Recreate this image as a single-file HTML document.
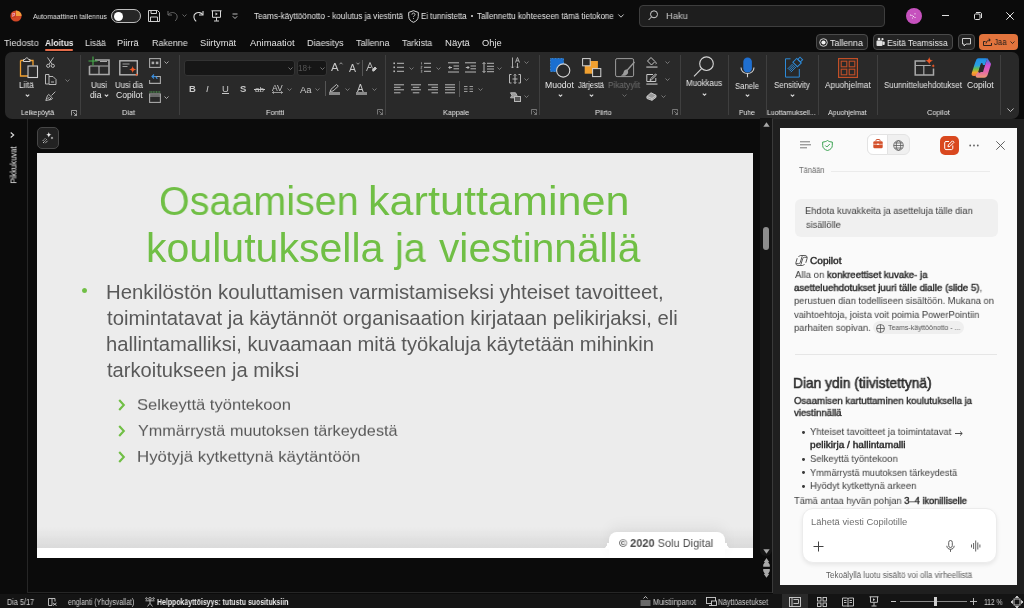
<!DOCTYPE html>
<html><head><meta charset="utf-8">
<style>
*{box-sizing:border-box;margin:0;padding:0}
html,body{width:1024px;height:608px;overflow:hidden;background:#0b0b0b;font-family:"Liberation Sans",sans-serif;position:relative}
.a{position:absolute;white-space:nowrap;will-change:transform}
svg{position:absolute;overflow:visible;will-change:transform}
.t{color:#e6e6e6}
.rib{position:absolute;left:5px;top:52px;width:1014px;height:66.5px;background:#292929;border-radius:7px}
.sep{position:absolute;top:55px;width:1px;height:60px;background:#3f3f3f}
.gl{position:absolute;top:107px;font-size:7px;color:#e8e8e8;white-space:nowrap}
.bl{position:absolute;font-size:7.6px;color:#e8e8e8;white-space:nowrap;text-align:center}
.btn{position:absolute;top:34px;height:16px;border:1px solid #4a4a4a;border-radius:4px;background:#232323}
</style></head><body>

<!-- ===== TITLE BAR ===== -->
<div id="titlebar">
  <!-- ppt logo -->
  <svg style="left:10px;top:10px" width="12" height="12" viewBox="0 0 12 12">
    <circle cx="6" cy="6" r="5.6" fill="#d24726"/>
    <path d="M6 .4A5.6 5.6 0 0 1 11.6 6H6Z" fill="#f39c3c"/>
    <rect x="1.6" y="4" width="4" height="4" fill="#c43e1c"/>
    <text x="2.2" y="7.4" font-size="4.5" fill="#ffb3e0" font-family="Liberation Sans" font-weight="700">P</text>
  </svg>
  <!-- toggle -->
  <div class="a" style="left:111px;top:9px;width:30px;height:14px;border:1px solid #bdbdbd;border-radius:7px;background:#262626"></div>
  <div class="a" style="left:114px;top:12px;width:9px;height:9px;border-radius:50%;background:#fff"></div>
  <!-- save -->
  <svg style="left:148px;top:10px" width="12" height="12" viewBox="0 0 12 12" fill="none" stroke="#cfcfcf" stroke-width="1">
    <path d="M.5 .5h9l2 2v9H.5Z"/><path d="M3 .5v3h5.5v-3"/><path d="M2.5 11.5v-4.5h7v4.5"/>
  </svg>
  <!-- undo (disabled) -->
  <svg style="left:167px;top:10px" width="12" height="12" viewBox="0 0 12 12" fill="none" stroke="#6b6b6b" stroke-width="1">
    <path d="M1 1v4h4"/><path d="M1.3 4.8C2.5 2.5 6 1.8 8.5 3.5c2.5 1.8 2 5.5-.5 7.5"/>
  </svg>
  <svg style="left:182px;top:14px" width="5" height="3" viewBox="0 0 5 3" fill="none" stroke="#7a7a7a" stroke-width=".8"><path d="M.5.5 2.5 2.5 4.5.5"/></svg>
  <!-- redo -->
  <svg style="left:193px;top:10px" width="11" height="12" viewBox="0 0 11 12" fill="none" stroke="#d8d8d8" stroke-width="1.1">
    <path d="M10 1v4H6"/><path d="M9.7 4.8C8.5 2.5 5 1.8 2.5 3.5 0 5.3.5 9 3.2 11.3"/>
  </svg>
  <!-- present -->
  <svg style="left:211px;top:10px" width="11" height="12" viewBox="0 0 11 12" fill="none" stroke="#d8d8d8" stroke-width="1">
    <path d="M.5 .8h10"/><path d="M1.5 .8v6.5h8V.8"/><path d="M5.5 7.3v3.5M3 11h5"/><path d="M4.5 2.5v3l2.3-1.5Z" fill="#d8d8d8" stroke="none"/>
  </svg>
  <!-- customize -->
  <svg style="left:232px;top:13px" width="6" height="7" viewBox="0 0 6 7" fill="none" stroke="#cfcfcf" stroke-width=".9">
    <path d="M.5 1h5"/><path d="M.8 3.3 3 5.5 5.2 3.3"/>
  </svg>

  <!-- shield -->
  <svg style="left:408px;top:10px" width="11" height="13" viewBox="0 0 11 13" fill="none" stroke="#d8d8d8" stroke-width="1">
    <path d="M5.5.7 10.3 2.4v4c0 3-2.2 5-4.8 5.9C2.9 11.4.7 9.4.7 6.4v-4Z"/>
    <path d="M4 4.6c0-1 .7-1.6 1.5-1.6S7 3.6 7 4.5c0 1.1-1.5 1.3-1.5 2.4" stroke-width=".9"/>
    <circle cx="5.5" cy="8.6" r=".5" fill="#d8d8d8" stroke="none"/>
  </svg>
  <div class="a" style="left:471px;top:15px;width:2.4px;height:2.4px;border-radius:50%;background:#e0e0e0"></div>
  <svg style="left:618px;top:14px" width="6" height="4" viewBox="0 0 6 4" fill="none" stroke="#d8d8d8" stroke-width=".9"><path d="M.4.5 3 3.2 5.6.5"/></svg>

  <!-- search -->
  <div class="a" style="left:639px;top:5px;width:246px;height:22px;border:1px solid #3e3e3e;border-radius:4px;background:#1e1e1e"></div>
  <svg style="left:648px;top:10px" width="10" height="11" viewBox="0 0 10 11" fill="none" stroke="#cfcfcf" stroke-width="1">
    <circle cx="6" cy="4.3" r="3.5"/><path d="M3.6 6.8.6 10"/>
  </svg>

  <!-- avatar -->
  <div class="a" style="left:906px;top:8px;width:16px;height:16px;border-radius:50%;background:#c651be"></div>
  <svg style="left:909px;top:12px" width="8" height="8" viewBox="0 0 8 8" fill="#fff">
    <circle cx="1.5" cy="3" r=".6"/><circle cx="3" cy="3.3" r=".6"/><circle cx="6" cy="1.8" r=".6"/><circle cx="4.5" cy="4.5" r=".6"/><circle cx="6" cy="5.5" r=".6"/><circle cx="3.5" cy="6" r=".5"/>
  </svg>
  <!-- window controls -->
  <div class="a" style="left:942px;top:15px;width:7px;height:1px;background:#e0e0e0"></div>
  <svg style="left:974px;top:12px" width="8" height="8" viewBox="0 0 8 8" fill="none" stroke="#e0e0e0" stroke-width="1">
    <rect x=".5" y="2" width="5.5" height="5.5" rx="1"/><path d="M2 .5h4c1 0 1.5.5 1.5 1.5v4"/>
  </svg>
  <svg style="left:1006px;top:12px" width="8" height="8" viewBox="0 0 8 8" fill="none" stroke="#e8e8e8" stroke-width="1">
    <path d="M.3.3 7.7 7.7M7.7.3.3 7.7"/>
  </svg>
</div>

<!-- ===== TABS ===== -->
<div id="tabs">
  <div class="a" style="left:45px;top:49px;width:28px;height:2px;background:#e46c4a;border-radius:1px"></div>

  <div class="btn" style="left:816px;width:52px"></div>
  <svg style="left:819px;top:37.5px" width="9" height="9" viewBox="0 0 9 9"><circle cx="4.5" cy="4.5" r="3.8" fill="none" stroke="#e0e0e0" stroke-width=".9"/><circle cx="4.5" cy="4.5" r="2.1" fill="#f0f0f0"/></svg>
  <div class="btn" style="left:873px;width:80px"></div>
  <svg style="left:876px;top:37px" width="9" height="10" viewBox="0 0 9 10" fill="#e0e0e0"><rect x=".5" y="3.5" width="6" height="5.5" rx="1"/><circle cx="3" cy="2" r="1.3"/><circle cx="6.5" cy="2.2" r="1.1"/><rect x="6.5" y="4.5" width="2.2" height="3.5" rx=".8"/></svg>
  <div class="btn" style="left:958px;width:17px"></div>
  <svg style="left:962px;top:38px" width="9" height="9" viewBox="0 0 9 9" fill="none" stroke="#e0e0e0" stroke-width=".9"><path d="M.5.5h8v5.5H4L2 8V6H.5Z"/></svg>
  <div class="a" style="left:979px;top:34px;width:39px;height:16px;border-radius:4px;background:#e2743d"></div>
  <svg style="left:983px;top:38px" width="9" height="8" viewBox="0 0 9 8" fill="none" stroke="#1a1a1a" stroke-width=".9"><path d="M.5 7.5v-4h2M.5 7.5h8v-2.5"/><path d="M3 5.5C3.5 3 5 2 7 2M5.8.6 7.3 2 5.8 3.4"/></svg>
  <svg style="left:1010px;top:41px" width="5" height="3" viewBox="0 0 5 3" fill="none" stroke="#1a1a1a" stroke-width=".8"><path d="M.5.5 2.5 2.5 4.5.5"/></svg>
</div>

<!-- ===== RIBBON ===== -->
<div class="rib"></div>
<div id="ribbon">
  <!-- separators -->
  <div class="sep" style="left:79.5px"></div>
  <div class="sep" style="left:178.5px"></div>
  <div class="sep" style="left:384.5px"></div>
  <div class="sep" style="left:538.5px"></div>
  <div class="sep" style="left:680px"></div>
  <div class="sep" style="left:727.5px"></div>
  <div class="sep" style="left:766px"></div>
  <div class="sep" style="left:817.5px"></div>
  <div class="sep" style="left:877px"></div>
  <div class="sep" style="left:1000px"></div>

  <!-- Leikepöytä -->
  <svg style="left:19px;top:57px" width="20" height="22" viewBox="0 0 20 22" fill="none">
    <path d="M1.5 3.5h3.5M10.5 3.5h3.5v5M1.5 3.5v15.5h7.5" stroke="#f0a030" stroke-width="1.3"/>
    <path d="M4.5 4.5V2.5h1.5c.3-1 .9-1.6 1.8-1.6s1.5.6 1.8 1.6h1.5v2Z" stroke="#d0d0d0" stroke-width="1"/>
    <rect x="9" y="9" width="9.5" height="11.5" stroke="#d0d0d0" stroke-width="1.1"/>
  </svg>
  <svg style="left:25px;top:94px" width="5" height="3" viewBox="0 0 5 3" fill="none" stroke="#e0e0e0" stroke-width="1.15"><path d="M.8.6 2.5 2.3 4.2.6"/></svg>
  <!-- scissors -->
  <svg style="left:46px;top:57px" width="9" height="11" viewBox="0 0 9 11" fill="none" stroke="#c8c8c8" stroke-width=".9">
    <path d="M1.5.5 6 7.2M7.5.5 3 7.2"/><circle cx="2.2" cy="8.8" r="1.6"/><circle cx="6.8" cy="8.8" r="1.6"/>
  </svg>
  <!-- copy -->
  <svg style="left:44.5px;top:74px" width="12" height="11" viewBox="0 0 12 11" fill="none" stroke="#c8c8c8" stroke-width=".9">
    <path d="M.5.5h3.5v9.5H.5Z"/><path d="M4 2.5h4l3 3v5H4"/><path d="M6 8h3"/>
  </svg>
  <svg style="left:64.5px;top:79px" width="5" height="3" viewBox="0 0 5 3" fill="none" stroke="#8a8a8a" stroke-width=".8"><path d="M.5.5 2.5 2.5 4.5.5"/></svg>
  <!-- painter -->
  <svg style="left:45px;top:90.5px" width="11" height="11" viewBox="0 0 11 11" fill="none" stroke="#c8c8c8" stroke-width=".9">
    <path d="M6.5 4.5 10.3.7"/><path d="M3.8 3.5 7.5 7.2 6.5 8.5 .8 9.5 2.5 4.5Z"/><path d="M2.5 8 4.5 6M4 9 6 7"/>
  </svg>
  <svg style="left:71px;top:109.5px" width="6" height="6" viewBox="0 0 6 6" fill="none" stroke="#bdbdbd" stroke-width=".8"><path d="M.5 5.5V.5h5v2M2.2 2.2 5.5 5.5M5.5 3.2v2.3H3.2"/></svg>

  <!-- Diat -->
  <svg style="left:88px;top:56px" width="22" height="20" viewBox="0 0 22 20" fill="none">
    <path d="M7 4h14v14.5H1.5V10" stroke="#a9a9a9" stroke-width="1.6"/>
    <path d="M1.5 10h19M11 10v8.5" stroke="#a9a9a9" stroke-width="1.2"/>
    <path d="M12 5.5h7" stroke="#a9a9a9" stroke-width="1"/>
    <path d="M5 .5v9M.5 5h9" stroke="#47b04b" stroke-width="1.1"/>
  </svg>
  <svg style="left:104px;top:94px" width="5" height="3" viewBox="0 0 5 3" fill="none" stroke="#e0e0e0" stroke-width="1.15"><path d="M.8.6 2.5 2.3 4.2.6"/></svg>
  <svg style="left:119px;top:59.5px" width="21" height="18" viewBox="0 0 21 18" fill="none">
    <rect x=".8" y=".8" width="17.5" height="14" stroke="#b5b5b5" stroke-width="1.4"/>
    <path d="M3.5 4h7M3.5 6.5h5" stroke="#a0a0a0" stroke-width="1"/>
    <path d="M13.7 6c.5 2.3 1.2 3 3.5 3.5-2.3.5-3 1.2-3.5 3.5-.5-2.3-1.2-3-3.5-3.5 2.3-.5 3-1.2 3.5-3.5Z" fill="#f05a28"/>
    <path d="M17.6 13c.25 1.2.6 1.55 1.8 1.8-1.2.25-1.55.6-1.8 1.8-.25-1.2-.6-1.55-1.8-1.8 1.2-.25 1.55-.6 1.8-1.8Z" fill="#f05a28"/>
  </svg>
  <svg style="left:148.5px;top:57.5px" width="12" height="10" viewBox="0 0 12 10" fill="none" stroke="#a9a9a9" stroke-width="1.1"><rect x=".6" y=".6" width="10.8" height="8.8"/><rect x="2.6" y="3.6" width="2.6" height="2.6" fill="#a9a9a9" stroke="none"/><rect x="6.8" y="3.6" width="2.6" height="2.6" fill="#a9a9a9" stroke="none"/></svg>
  <svg style="left:164px;top:61px" width="5" height="3" viewBox="0 0 5 3" fill="none" stroke="#b8b8b8" stroke-width=".9"><path d="M.5.5 2.5 2.5 4.5.5"/></svg>
  <svg style="left:148.5px;top:74px" width="12" height="10" viewBox="0 0 12 10" fill="none"><path d="M4 2.5h7.4v6.9H.6V6" stroke="#a9a9a9" stroke-width="1.1"/><path d="M5 4.5 3 2.5 5 .5M3 2.5h2.5c1.5 0 2.5 1 2.5 2.5" stroke="#3b8ede" stroke-width="1.1"/></svg>
  <svg style="left:148.5px;top:90.5px" width="12" height="12" viewBox="0 0 12 12" fill="none"><rect x=".6" y="3" width="10.8" height="8.4" stroke="#a9a9a9" stroke-width="1.1"/><path d="M.6 1h10.8" stroke="#5cb85c" stroke-width="1.2" stroke-dasharray="1 .6"/><path d="M.6 5h10.8" stroke="#a9a9a9" stroke-width="1"/></svg>
  <svg style="left:164px;top:96px" width="5" height="3" viewBox="0 0 5 3" fill="none" stroke="#b8b8b8" stroke-width=".9"><path d="M.5.5 2.5 2.5 4.5.5"/></svg>

  <!-- Fontti -->
  <div class="a" style="left:184px;top:60px;width:110.5px;height:15.5px;background:#161616;border:1px solid #333;border-radius:3px"></div>
  <svg style="left:288px;top:67px" width="5" height="3" viewBox="0 0 5 3" fill="none" stroke="#8a8a8a" stroke-width=".8"><path d="M.5.5 2.5 2.5 4.5.5"/></svg>
  <div class="a" style="left:296.5px;top:60px;width:30px;height:15.5px;background:#161616;border:1px solid #333;border-radius:3px"></div>
  <div class="a" style="left:298px;top:63.5px;font-size:8.2px;color:#555">18+</div>
  <svg style="left:320px;top:67px" width="5" height="3" viewBox="0 0 5 3" fill="none" stroke="#8a8a8a" stroke-width=".8"><path d="M.5.5 2.5 2.5 4.5.5"/></svg>
  <div class="a" style="left:331px;top:60.5px;font-size:11.5px;color:#c8c8c8">A</div>
  <svg style="left:339px;top:62px" width="4" height="3" viewBox="0 0 4 3" fill="none" stroke="#c8c8c8" stroke-width=".7"><path d="M.5 2.3 2 .7 3.5 2.3"/></svg>
  <div class="a" style="left:349px;top:61.5px;font-size:10.5px;color:#c8c8c8">A</div>
  <svg style="left:356px;top:62px" width="4" height="3" viewBox="0 0 4 3" fill="none" stroke="#c8c8c8" stroke-width=".7"><path d="M.5.7 2 2.3 3.5.7"/></svg>
  <div class="a" style="left:362px;top:60px;width:1px;height:16px;background:#555"></div>
  <svg style="left:366px;top:62px" width="11" height="11" viewBox="0 0 11 11" fill="none" stroke="#c8c8c8" stroke-width=".9"><path d="M.5 9 4 .5 6.5 6.5"/><path d="M2 5.5h3"/><path d="M6.5 7.5 9 5l1.5 1.5-2.5 2.5-1.2.1Z" fill="#c8c8c8"/></svg>

  <div class="a" style="left:189px;top:83px;font-size:9.5px;font-weight:700;color:#c8c8c8">B</div>
  <div class="a" style="left:206px;top:83px;font-size:9.5px;font-style:italic;color:#c8c8c8">I</div>
  <div class="a" style="left:222px;top:83px;font-size:9.5px;color:#c8c8c8">U</div>
  <div class="a" style="left:222px;top:93px;width:7px;height:1px;background:#c8c8c8"></div>
  <div class="a" style="left:239.5px;top:83px;font-size:9.5px;font-weight:700;color:#c8c8c8">S</div>
  <div class="a" style="left:255px;top:84.5px;font-size:8px;color:#c8c8c8">ab</div>
  <div class="a" style="left:254px;top:89px;width:11px;height:1px;background:#c8c8c8"></div>
  <div class="a" style="left:271.5px;top:82.5px;font-size:8.5px;color:#c8c8c8">AV</div>
  <svg style="left:272px;top:91px" width="11" height="3" viewBox="0 0 11 3" fill="none" stroke="#c8c8c8" stroke-width=".7"><path d="M.5 1.5h10M2 .3.5 1.5 2 2.7M9 .3 10.5 1.5 9 2.7"/></svg>
  <svg style="left:287px;top:88px" width="5" height="3" viewBox="0 0 5 3" fill="none" stroke="#8a8a8a" stroke-width=".8"><path d="M.5.5 2.5 2.5 4.5.5"/></svg>
  <div class="a" style="left:299.5px;top:83.5px;font-size:9.5px;color:#c8c8c8">Aa</div>
  <svg style="left:315px;top:88px" width="5" height="3" viewBox="0 0 5 3" fill="none" stroke="#8a8a8a" stroke-width=".8"><path d="M.5.5 2.5 2.5 4.5.5"/></svg>
  <div class="a" style="left:325px;top:81px;width:1px;height:15px;background:#555"></div>
  <svg style="left:329px;top:83.5px" width="11" height="8" viewBox="0 0 11 8" fill="none" stroke="#c8c8c8" stroke-width=".9"><path d="M1 7.5 2 5.3 7.5 .5 9.3 2.2 4 7Z"/></svg>
  <div class="a" style="left:329px;top:92px;width:11px;height:2.6px;background:#8a8a8a"></div>
  <svg style="left:345px;top:88px" width="5" height="3" viewBox="0 0 5 3" fill="none" stroke="#8a8a8a" stroke-width=".8"><path d="M.5.5 2.5 2.5 4.5.5"/></svg>
  <div class="a" style="left:357px;top:82.5px;font-size:10px;color:#c8c8c8">A</div>
  <div class="a" style="left:356px;top:92px;width:11px;height:2.6px;background:#8a8a8a"></div>
  <svg style="left:372px;top:88px" width="5" height="3" viewBox="0 0 5 3" fill="none" stroke="#8a8a8a" stroke-width=".8"><path d="M.5.5 2.5 2.5 4.5.5"/></svg>
  <svg style="left:377px;top:109px" width="6" height="6" viewBox="0 0 6 6" fill="none" stroke="#8a8a8a" stroke-width=".8"><path d="M.5 5.5V.5h5v2M2.2 2.2 5.5 5.5M5.5 3.2v2.3H3.2"/></svg>
  <!-- Kappale -->
  <svg style="left:392.5px;top:62px" width="11" height="11" viewBox="0 0 11 11" fill="none" stroke="#b8b8b8">
    <path d="M4 1.3h7M4 5.3h7M4 9.3h7" stroke-width="1"/><rect x=".4" y=".5" width="1.6" height="1.6" fill="#b8b8b8" stroke="none"/><rect x=".4" y="4.5" width="1.6" height="1.6" fill="#b8b8b8" stroke="none"/><rect x=".4" y="8.5" width="1.6" height="1.6" fill="#b8b8b8" stroke="none"/>
  </svg>
  <svg style="left:409px;top:67px" width="5" height="3" viewBox="0 0 5 3" fill="none" stroke="#8a8a8a" stroke-width=".8"><path d="M.5.5 2.5 2.5 4.5.5"/></svg>
  <svg style="left:420px;top:62px" width="11" height="11" viewBox="0 0 11 11" fill="none" stroke="#b8b8b8">
    <path d="M4 1.3h7M4 5.3h7M4 9.3h7" stroke-width="1"/><path d="M1.5.2v2.3M.8 4.3h1.3l-1.3 2h1.3M.8 8.2h1.3l-.6 1 .6 1H.8" stroke-width=".6"/>
  </svg>
  <svg style="left:436px;top:67px" width="5" height="3" viewBox="0 0 5 3" fill="none" stroke="#8a8a8a" stroke-width=".8"><path d="M.5.5 2.5 2.5 4.5.5"/></svg>
  <svg style="left:447.5px;top:62px" width="11" height="11" viewBox="0 0 11 11" fill="none" stroke="#b8b8b8" stroke-width="1">
    <path d="M0 .8h11M5.5 4h5.5M5.5 6.8h5.5M0 10h11M4 5.5H.8M2.3 4 .8 5.5 2.3 7"/>
  </svg>
  <svg style="left:464.5px;top:62px" width="11" height="11" viewBox="0 0 11 11" fill="none" stroke="#b8b8b8" stroke-width="1">
    <path d="M0 .8h11M5.5 4h5.5M5.5 6.8h5.5M0 10h11M.8 5.5H4M2.5 4 4 5.5 2.5 7"/>
  </svg>
  <svg style="left:481.5px;top:62px" width="12" height="11" viewBox="0 0 12 11" fill="none" stroke="#b8b8b8" stroke-width="1">
    <path d="M5 1.3h7M5 4.3h7M5 7h7M5 9.7h7M2 .5v10M.5 2 2 .5 3.5 2M.5 9 2 10.5 3.5 9"/>
  </svg>
  <svg style="left:497px;top:67px" width="5" height="3" viewBox="0 0 5 3" fill="none" stroke="#8a8a8a" stroke-width=".8"><path d="M.5.5 2.5 2.5 4.5.5"/></svg>
  <svg style="left:510.5px;top:57px" width="10" height="12" viewBox="0 0 10 12" fill="none" stroke="#b8b8b8" stroke-width=".9">
    <path d="M1.5 .5v10.5M.3 9.7 1.5 11 2.7 9.7M6.5 6v5M5.3 9.7 6.5 11 7.7 9.7M4.5 5.5 6.5.5 8.5 5.5M5.2 3.8h2.6"/>
  </svg>
  <svg style="left:524px;top:61px" width="5" height="3" viewBox="0 0 5 3" fill="none" stroke="#8a8a8a" stroke-width=".8"><path d="M.5.5 2.5 2.5 4.5.5"/></svg>
  <svg style="left:509px;top:74px" width="12" height="10" viewBox="0 0 12 10" fill="none" stroke="#b8b8b8" stroke-width="1">
    <path d="M2.5.5h-2v8.5h2M9.5.5h2v8.5h-2M6 .3v9.2M4.8 1.5 6 .3 7.2 1.5M4.8 8.3 6 9.5 7.2 8.3M3.5 5h5"/>
  </svg>
  <svg style="left:524px;top:78px" width="5" height="3" viewBox="0 0 5 3" fill="none" stroke="#8a8a8a" stroke-width=".8"><path d="M.5.5 2.5 2.5 4.5.5"/></svg>
  <svg style="left:509.5px;top:91.5px" width="11" height="10" viewBox="0 0 11 10" fill="none" stroke="#b8b8b8" stroke-width="1">
    <path d="M.5.8h5l1.5 2.5-1.5 2.5h-5l1.5-2.5Z" fill="#9a9a9a"/><rect x="4.5" y="4.5" width="6" height="5" fill="#555"/>
  </svg>
  <svg style="left:524px;top:95px" width="5" height="3" viewBox="0 0 5 3" fill="none" stroke="#8a8a8a" stroke-width=".8"><path d="M.5.5 2.5 2.5 4.5.5"/></svg>
  <svg style="left:393.5px;top:84px" width="10" height="10" viewBox="0 0 10 10" fill="none" stroke="#b8b8b8" stroke-width="1"><path d="M0 .8h10M0 3.3h6.5M0 5.8h10M0 8.8h6.5"/></svg>
  <svg style="left:410.5px;top:84px" width="10" height="10" viewBox="0 0 10 10" fill="none" stroke="#b8b8b8" stroke-width="1"><path d="M0 .8h10M1.8 3.3h6.5M0 5.8h10M1.8 8.8h6.5"/></svg>
  <svg style="left:427.5px;top:84px" width="10" height="10" viewBox="0 0 10 10" fill="none" stroke="#b8b8b8" stroke-width="1"><path d="M0 .8h10M3.5 3.3h6.5M0 5.8h10M3.5 8.8h6.5"/></svg>
  <svg style="left:444.5px;top:84px" width="10" height="10" viewBox="0 0 10 10" fill="none" stroke="#b8b8b8" stroke-width="1"><path d="M0 .8h10M0 3.3h10M0 5.8h10M0 8.8h10"/></svg>
  <div class="a" style="left:459px;top:81px;width:1px;height:16px;background:#555"></div>
  <svg style="left:464px;top:86px" width="9" height="6" viewBox="0 0 9 6" fill="none" stroke="#9a9a9a" stroke-width="1"><path d="M0 .5h3.5M0 3h3.5M0 5.5h3.5M5.5 .5H9M5.5 3H9M5.5 5.5H9"/></svg>
  <svg style="left:478px;top:88px" width="5" height="3" viewBox="0 0 5 3" fill="none" stroke="#8a8a8a" stroke-width=".8"><path d="M.5.5 2.5 2.5 4.5.5"/></svg>
  <svg style="left:531px;top:109px" width="6" height="6" viewBox="0 0 6 6" fill="none" stroke="#8a8a8a" stroke-width=".8"><path d="M.5 5.5V.5h5v2M2.2 2.2 5.5 5.5M5.5 3.2v2.3H3.2"/></svg>

  <!-- Piirto -->
  <svg style="left:549.5px;top:57.5px" width="21" height="21" viewBox="0 0 21 21" fill="none">
    <rect x=".5" y=".5" width="13" height="13" fill="#1a6fd1" stroke="#3b8ede" stroke-width=".8" stroke-dasharray="1 .5"/>
    <circle cx="13.2" cy="12.5" r="6.6" fill="#292929" stroke="#d5d5d5" stroke-width="1.1"/>
  </svg>
  <svg style="left:557.5px;top:94px" width="5" height="3" viewBox="0 0 5 3" fill="none" stroke="#e0e0e0" stroke-width="1.15"><path d="M.8.6 2.5 2.3 4.2.6"/></svg>
  <svg style="left:582px;top:58px" width="20" height="20" viewBox="0 0 20 20" fill="none">
    <rect x="2.7" y="3" width="13.2" height="12.7" fill="#f0a030"/>
    <rect x=".6" y=".6" width="7.6" height="7.2" fill="#292929" stroke="#d5d5d5" stroke-width="1"/>
    <rect x="10.6" y="10.6" width="8.2" height="8" fill="#292929" stroke="#d5d5d5" stroke-width="1"/>
  </svg>
  <svg style="left:589px;top:94px" width="5" height="3" viewBox="0 0 5 3" fill="none" stroke="#e0e0e0" stroke-width="1.15"><path d="M.8.6 2.5 2.3 4.2.6"/></svg>
  <svg style="left:615px;top:57.5px" width="20" height="20" viewBox="0 0 20 20" fill="none" stroke="#9c9c9c">
    <rect x=".6" y=".6" width="18" height="18" rx="1.5" stroke-width="1"/>
    <path d="M19.5 4 11.5 13" stroke-width="1.3"/><path d="M12.5 12c-1.5-1-3.5 0-4 2.5-.4 2-2 2.5-2.5 3 2 .5 5 .5 6.5-1.5 1-1.3.8-2.8 0-4Z" fill="#9c9c9c" stroke="none"/>
  </svg>
  <svg style="left:622px;top:94px" width="5" height="3" viewBox="0 0 5 3" fill="none" stroke="#707070" stroke-width=".9"><path d="M.5.5 2.5 2.5 4.5.5"/></svg>
  <svg style="left:645.5px;top:57px" width="12" height="11" viewBox="0 0 12 11" fill="none" stroke="#c8c8c8" stroke-width="1">
    <path d="M5 .5 9 4.5 5.5 8 1.5 4Z"/><path d="M9.5 5c.8 1 1 1.8.3 2.2" /><rect x=".3" y="9.2" width="11.2" height="1.8" fill="#8a8a8a" stroke="none"/>
  </svg>
  <svg style="left:665px;top:61px" width="5" height="3" viewBox="0 0 5 3" fill="none" stroke="#8a8a8a" stroke-width=".8"><path d="M.5.5 2.5 2.5 4.5.5"/></svg>
  <svg style="left:645.5px;top:74px" width="12" height="11" viewBox="0 0 12 11" fill="none" stroke="#c8c8c8" stroke-width="1">
    <path d="M7 .5H.8v7h9V4"/><path d="M4 6.5 4.5 4.8 9.5 0l1 1-5 4.8Z"/><rect x=".3" y="9.2" width="11.2" height="1.8" fill="#8a8a8a" stroke="none"/>
  </svg>
  <svg style="left:665px;top:78px" width="5" height="3" viewBox="0 0 5 3" fill="none" stroke="#8a8a8a" stroke-width=".8"><path d="M.5.5 2.5 2.5 4.5.5"/></svg>
  <svg style="left:645.5px;top:92px" width="11" height="9" viewBox="0 0 11 9" fill="none" stroke="#c8c8c8" stroke-width="1">
    <path d="M.8 4.5 5 .8l5 2.5v2L6 8.3 1 6.5Z" fill="#9a9a9a"/><path d="M1 4.5 6 6.5l4-3M6 6.5v1.8"/>
  </svg>
  <svg style="left:660.5px;top:95px" width="5" height="3" viewBox="0 0 5 3" fill="none" stroke="#8a8a8a" stroke-width=".8"><path d="M.5.5 2.5 2.5 4.5.5"/></svg>
  <svg style="left:672px;top:109px" width="6" height="6" viewBox="0 0 6 6" fill="none" stroke="#8a8a8a" stroke-width=".8"><path d="M.5 5.5V.5h5v2M2.2 2.2 5.5 5.5M5.5 3.2v2.3H3.2"/></svg>

  <!-- Muokkaus -->
  <svg style="left:693px;top:56px" width="22" height="21" viewBox="0 0 22 21" fill="none" stroke="#d5d5d5" stroke-width="1.1">
    <circle cx="13.5" cy="7.7" r="6.8"/><path d="M8.6 12.6 1 20.3"/>
  </svg>
  <svg style="left:701.5px;top:92.5px" width="5" height="3" viewBox="0 0 5 3" fill="none" stroke="#e0e0e0" stroke-width="1.15"><path d="M.8.6 2.5 2.3 4.2.6"/></svg>

  <!-- Puhe -->
  <svg style="left:740px;top:56.5px" width="15" height="21" viewBox="0 0 15 21" fill="none">
    <rect x="3.3" y=".5" width="8.6" height="15" rx="4.3" fill="#1f6fd0"/>
    <path d="M1 10.5c0 3.5 3 6 6.5 6s6.5-2.5 6.5-6M7.5 16.5v3.8" stroke="#cfcfcf" stroke-width="1.1"/>
  </svg>
  <svg style="left:745px;top:94px" width="5" height="3" viewBox="0 0 5 3" fill="none" stroke="#e0e0e0" stroke-width="1.15"><path d="M.8.6 2.5 2.3 4.2.6"/></svg>

  <!-- Sensitivity -->
  <svg style="left:784px;top:56.5px" width="20" height="21" viewBox="0 0 20 21" fill="none">
    <path d="M6.5 1.8H1.5v18.3h13.8V12" stroke="#2d8ad8" stroke-width="1"/>
    <g transform="translate(11.5 7.2) rotate(-45)" stroke="#2d8ad8">
      <path d="M-9-2.2h7.5M-9-.7h7.5M-9 .8h7.5M-9 2.3h7.5" stroke-width=".9"/>
      <rect x="-.5" y="-3.2" width="5.5" height="6.4" stroke-width="1"/>
      <rect x="5" y="-1.8" width="3.2" height="3.6" stroke-width="1"/>
    </g>
  </svg>
  <svg style="left:790px;top:94px" width="5" height="3" viewBox="0 0 5 3" fill="none" stroke="#e0e0e0" stroke-width="1.15"><path d="M.8.6 2.5 2.3 4.2.6"/></svg>

  <!-- Apuohjelmat -->
  <svg style="left:837.5px;top:57.5px" width="20" height="20" viewBox="0 0 20 20" fill="none" stroke="#c24f27" stroke-width="1.1">
    <rect x=".6" y=".6" width="18.8" height="18.8" stroke-width="1.2"/><rect x="3.2" y="3.2" width="5.6" height="5.6"/><rect x="11.2" y="3.2" width="5.6" height="5.6"/><rect x="3.2" y="11.2" width="5.6" height="5.6"/><rect x="11.2" y="11.2" width="5.6" height="5.6"/>
  </svg>

  <!-- Copilot group -->
  <svg style="left:913.5px;top:55.5px" width="23" height="20" viewBox="0 0 23 20" fill="none">
    <path d="M11.5 5H1.2v14h18.3v-6.5" stroke="#a9a9a9" stroke-width="1.5"/>
    <path d="M1.2 9.5h15.5M9.8 9.5V19" stroke="#a9a9a9" stroke-width="1.2"/>
    <path d="M15.2 1c.5 2.5 1.3 3.3 3.8 3.8-2.5.5-3.3 1.3-3.8 3.8-.5-2.5-1.3-3.3-3.8-3.8 2.5-.5 3.3-1.3 3.8-3.8Z" fill="#f05a28"/>
    <path d="M19.2 8c.25 1.3.65 1.7 1.9 1.9-1.25.25-1.65.65-1.9 1.9-.25-1.25-.65-1.65-1.9-1.9 1.25-.2 1.65-.6 1.9-1.9Z" fill="#f05a28"/>
  </svg>
  <svg style="left:970.5px;top:57.5px" width="20" height="20" viewBox="0 0 20 20">
    <defs>
      <linearGradient id="cg1" x1="0" y1="0" x2="0" y2="1"><stop offset="0" stop-color="#1f8ee8"/><stop offset=".4" stop-color="#2aa0e0"/><stop offset=".6" stop-color="#69c04a"/><stop offset=".8" stop-color="#f2a42e"/><stop offset="1" stop-color="#f07a3a"/></linearGradient>
      <linearGradient id="cg2" x1="0" y1="0" x2="0" y2="1"><stop offset="0" stop-color="#1f7fe0"/><stop offset=".35" stop-color="#d04fd6"/><stop offset=".7" stop-color="#e46aa8"/><stop offset="1" stop-color="#ee9a72"/></linearGradient>
    </defs>
    <path d="M5.5 1.2C6 .6 6.8.3 7.8.3h6.5c1 0 1.6.5 1.3 1.5L14 7H9.5L7 15.5c-.4 1.4-1.5 2.5-3 2.5H2.6C1 18 .2 16.7.7 15.2L4 5Z" fill="url(#cg1)"/>
    <path d="M14.5 1.5c.4-.8 1-1.2 2-1.2 0 0 0 0 0 0L19.6 5c.5.8.4 1.6 0 2.5l-3 9.5c-.5 1.6-1.8 2.8-3.5 2.8H6.5c-1.5 0-2.2-1.2-1.6-2.5L6 15.5c.5-1 1.2-1.5 2.5-1.5H12l3.5-11.5Z" fill="url(#cg2)"/>
    <path d="M10.8 6.2 8.6 13.6" stroke="#292929" stroke-width="2.2" stroke-linecap="round"/>
  </svg>
  <svg style="left:1007px;top:107.5px" width="7" height="4" viewBox="0 0 7 4" fill="none" stroke="#d0d0d0" stroke-width=".9"><path d="M.4.5 3.5 3.5 6.6.5"/></svg>
</div>


<!-- ===== MAIN AREA ===== -->
<div id="main">
  <!-- left thumbnails strip -->
  <div class="a" style="left:26.5px;top:119px;width:1px;height:474px;background:#262626"></div>
  <div class="a" style="left:27px;top:592px;width:746px;height:1px;background:#262626"></div>
  <svg style="left:10px;top:131.5px" width="5" height="6" viewBox="0 0 5 6" fill="none" stroke="#e0e0e0" stroke-width="1.1"><path d="M.7.5 3.7 3 .7 5.5"/></svg>
  <div class="a" style="left:-8.5px;top:160px;width:43px;height:10px;font-size:8.8px;color:#ececec;transform:rotate(-90deg) scaleX(.87);text-align:center;line-height:10px">Pikkukuvat</div>
  <!-- magic button -->
  <div class="a" style="left:37px;top:127px;width:21.5px;height:21.5px;border:1px solid #474747;border-radius:5px;background:#222"></div>
  <svg style="left:42px;top:132px" width="12" height="12" viewBox="0 0 12 12" fill="#ececec">
    <path d="M6.8 0c.35 1.8 1 2.5 2.8 2.8-1.8.35-2.45 1-2.8 2.8-.35-1.8-1-2.45-2.8-2.8C5.8 2.5 6.45 1.8 6.8 0Z"/>
    <path d="M10 4.6c.2.9.5 1.2 1.4 1.4-.9.2-1.2.5-1.4 1.4-.2-.9-.5-1.2-1.4-1.4.9-.2 1.2-.5 1.4-1.4Z"/>
    <path d="M1 11 4.6 7.4M.8 8.8 3.6 6M3.2 11.2 6 8.4" stroke="#ececec" stroke-width=".9" stroke-dasharray="1.3 .7"/>
  </svg>

  <!-- slide -->
  <div class="a" style="left:37px;top:153px;width:716px;height:405px;background:#ececec;overflow:hidden">
    <div class="a" style="left:0;top:374px;width:716px;height:21px;background:linear-gradient(rgba(220,220,220,0),#dadada)"></div>
    <div class="a" style="left:0;top:394.5px;width:716px;height:10px;background:#fff"></div>
    <!-- footer tab -->
    <div class="a" style="left:572px;top:379px;width:116px;height:26px;background:#fff;border-radius:8px 8px 0 0;box-shadow:0 -6px 14px rgba(0,0,0,.05)"></div>
    <div class="a" style="left:564px;top:390px;width:10px;height:6px;background:radial-gradient(circle at 0 0,transparent 6px,#fff 6.5px)"></div>
    <div class="a" style="left:686px;top:390px;width:10px;height:6px;background:radial-gradient(circle at 100% 0,transparent 6px,#fff 6.5px)"></div>

    <!-- title -->

    <!-- body -->
    <div class="a" style="left:44px;top:134px;width:7px;height:7px;border-radius:50%;background:#70bf45;transform:scale(.7)"></div>
    <svg style="left:81px;top:246px" width="8" height="12" viewBox="0 0 8 12" fill="none" stroke="#70bf45" stroke-width="2.1"><path d="M1.2 1 5.8 6 1.2 11"/></svg>
    <svg style="left:81px;top:272px" width="8" height="12" viewBox="0 0 8 12" fill="none" stroke="#70bf45" stroke-width="2.1"><path d="M1.2 1 5.8 6 1.2 11"/></svg>
    <svg style="left:81px;top:297.5px" width="8" height="12" viewBox="0 0 8 12" fill="none" stroke="#70bf45" stroke-width="2.1"><path d="M1.2 1 5.8 6 1.2 11"/></svg>
  </div>

  <!-- scrollbar -->
  <div class="a" style="left:760px;top:118px;width:12px;height:438px;background:#151515;border-radius:0 0 6px 6px"></div>
  <div class="a" style="left:772px;top:119px;width:1px;height:474px;background:#3a3a3a"></div>
  <svg style="left:763px;top:121.5px" width="7" height="5" viewBox="0 0 7 5"><path d="M3.5.3 6.7 4.7H.3Z" fill="#a8a8a8"/></svg>
  <div class="a" style="left:763px;top:227px;width:6px;height:23px;border-radius:3px;background:#8e8e8e"></div>
  <svg style="left:763px;top:549px" width="7" height="5" viewBox="0 0 7 5"><path d="M3.5 4.7 6.7.3H.3Z" fill="#a8a8a8"/></svg>
  <svg style="left:763px;top:557.5px" width="7" height="9" viewBox="0 0 7 9" fill="#a8a8a8"><path d="M3.5 0 6.2 3.9H5.1L6.8 6.7V8.8H.2V6.7L1.9 3.9H.8Z"/></svg>
  <svg style="left:763px;top:569px" width="7" height="9" viewBox="0 0 7 9" fill="#a8a8a8"><path d="M.2 0H6.8V2.1L5.1 4.9H6.2L3.5 8.8.8 4.9H1.9L.2 2.1Z"/></svg>
</div>


<!-- ===== COPILOT ===== -->
<div id="copilot">
  <div class="a" style="left:773px;top:119px;width:251px;height:475px;background:#1f1f1f"></div>
  <div class="a" style="left:780px;top:127px;width:237px;height:458px;overflow:hidden">
    <div class="a" style="left:0;top:1px;width:237px;height:457px;background:#fafafa"></div>
    <!-- header icons (coords relative: x-780, y-127) -->
    <svg style="left:20px;top:14px" width="11" height="8" viewBox="0 0 11 8" fill="none" stroke="#6a6a6a" stroke-width=".9"><path d="M0 .8h10M0 3.8h11M0 6.8h7"/></svg>
    <svg style="left:41.5px;top:12.5px" width="11" height="11" viewBox="0 0 11 11" fill="none" stroke="#3aa251" stroke-width="1"><path d="M5.5.5C4 1.6 2.5 2 .7 2v3.5c0 2.5 1.8 4.2 4.8 5 3-.8 4.8-2.5 4.8-5V2C8.5 2 7 1.6 5.5.5Z"/><path d="M3.3 5.5 4.8 7l3-3"/></svg>
    <div class="a" style="left:87px;top:7px;width:42.5px;height:21px;border:1px solid #e3e3e3;border-radius:6px;background:#f0f0f0"></div>
    <div class="a" style="left:87px;top:7px;width:21px;height:21px;border:1px solid #e3e3e3;border-radius:6px 0 0 6px;background:#fff"></div>
    <svg style="left:92.5px;top:12px" width="10" height="10" viewBox="0 0 10 10"><path d="M3 2.2V1.2c0-.4.3-.7.7-.7h2.6c.4 0 .7.3.7.7v1" fill="none" stroke="#c8431e" stroke-width=".9"/><rect x=".3" y="2.3" width="9.4" height="6.9" rx="1.2" fill="#d4502a"/><path d="M.3 5.3h9.4" stroke="#fff" stroke-width=".6"/><rect x="4.2" y="4.6" width="1.6" height="1.4" fill="#fff"/></svg>
    <svg style="left:113px;top:12.5px" width="11" height="11" viewBox="0 0 11 11" fill="none" stroke="#505050" stroke-width=".75"><circle cx="5.5" cy="5.5" r="4.8"/><ellipse cx="5.5" cy="5.5" rx="2.2" ry="4.8"/><path d="M.7 5.5h9.6M1.5 3h8M1.5 8h8"/></svg>
    <div class="a" style="left:159.5px;top:8.5px;width:18.5px;height:18.5px;border-radius:5px;background:#d9481f"></div>
    <svg style="left:163.5px;top:12.5px" width="11" height="11" viewBox="0 0 11 11" fill="none" stroke="#fff" stroke-width="1"><path d="M5 1.5H2A1.3 1.3 0 0 0 .7 2.8v5.5c0 .7.6 1.3 1.3 1.3h5.5c.7 0 1.3-.6 1.3-1.3V5.5"/><path d="M4 6.8 4.3 5 8.5.8 10 2.3 5.8 6.5Z"/></svg>
    <svg style="left:189px;top:16.5px" width="10" height="3" viewBox="0 0 10 3" fill="#616161"><circle cx="1.2" cy="1.5" r=".9"/><circle cx="5" cy="1.5" r=".9"/><circle cx="8.8" cy="1.5" r=".9"/></svg>
    <svg style="left:216px;top:14px" width="9" height="9" viewBox="0 0 9 9" fill="none" stroke="#505050" stroke-width=".9"><path d="M.3.3 8.7 8.7M8.7.3.3 8.7"/></svg>

    <div class="a" style="left:51px;top:44px;width:159px;height:1px;background:#ebebeb"></div>

    <!-- user bubble -->
    <div class="a" style="left:14.5px;top:72px;width:202.5px;height:38px;border-radius:6px;background:#f0f0f0"></div>

    <!-- copilot response -->
    <svg style="left:14.5px;top:127.5px" width="13" height="11" viewBox="0 0 13 11" fill="none" stroke="#3a3a3a" stroke-width=".85"><path d="M3.6 2C4 1 4.7.5 5.7.5h4.2c1.6 0 2.6 1.3 2.2 2.8l-1.3 4.5"/><path d="M9.4 9c-.4 1-1.1 1.5-2.1 1.5H3.1C1.5 10.5.5 9.2.9 7.7l1.3-4.5"/><path d="M7.2 1.2 5.3 7.3c-.3 1-.9 1.4-1.9 1.4H1"/><path d="M5.8 9.8 7.7 3.7c.3-1 .9-1.4 1.9-1.4H12"/></svg>
    <div class="a" style="left:93.3px;top:194.4px;width:90.7px;height:13px;border-radius:6.5px;background:#efefef"></div>
    <svg style="left:96px;top:196.5px" width="9" height="9" viewBox="0 0 9 9" fill="none" stroke="#555" stroke-width=".8"><circle cx="4.5" cy="4.5" r="4"/><path d="M4.5.5v8M.5 4.5h8"/></svg>

    <div class="a" style="left:14.5px;top:227px;width:202px;height:1px;background:#e6e6e6"></div>


    <!-- input -->
    <div class="a" style="left:21.5px;top:380.5px;width:195px;height:55px;border-radius:11px;background:#fff;border:1px solid #ececec;box-shadow:0 2px 4px rgba(0,0,0,.08)"></div>
    <svg style="left:33px;top:414px" width="11" height="11" viewBox="0 0 11 11" fill="none" stroke="#424242" stroke-width="1"><path d="M5.5.5v10M.5 5.5h10"/></svg>
    <svg style="left:165.5px;top:412.5px" width="9" height="13" viewBox="0 0 9 13" fill="none" stroke="#505050" stroke-width=".9"><rect x="2.7" y=".5" width="3.6" height="7" rx="1.8"/><path d="M.8 5.8c0 2 1.6 3.5 3.7 3.5s3.7-1.5 3.7-3.5M4.5 9.3v2.6"/></svg>
    <svg style="left:191px;top:412.5px" width="10" height="12" viewBox="0 0 10 12" fill="none" stroke="#505050" stroke-width=".9"><path d="M.5 4.5v3M2.6 3v6M4.7 .5v11M6.8 2.5v7M8.9 4.5v3"/></svg>
  </div>
</div>


<!-- ===== STATUS ===== -->
<div id="status">
  <div class="a" style="left:0;top:594px;width:1024px;height:14px;background:#141414"></div>
  <svg style="left:47.5px;top:597.5px" width="10" height="8" viewBox="0 0 10 8" fill="none" stroke="#c8c8c8" stroke-width=".9"><path d="M.5.5h3.5v7H.5ZM4 .5h3v3M5 5l3.5 2.5M8.5 5 5 7.5"/></svg>
  <svg style="left:145px;top:596.5px" width="10" height="10" viewBox="0 0 10 10" fill="none" stroke="#d0d0d0" stroke-width=".8"><circle cx="5" cy="1.8" r="1.3"/><path d="M.5 3.8h9M5 3.8v2.5L2.5 9.5M5 6.3l2.5 3.2"/><circle cx="1.5" cy="1.5" r=".8"/><circle cx="8.5" cy="1.5" r=".8"/></svg>

  <svg style="left:640px;top:596px" width="11" height="10" viewBox="0 0 11 10" fill="none" stroke="#d0d0d0" stroke-width=".9"><path d="M3.5 2.5 5.5.5l2 2M.5 5h10M.5 7h10M.5 9h10"/></svg>
  <svg style="left:706px;top:597px" width="11" height="9" viewBox="0 0 11 9" fill="none" stroke="#d0d0d0" stroke-width=".9"><rect x=".5" y=".5" width="9" height="6"/><path d="M3 8.5h4"/><rect x="5.5" y="4" width="5" height="4.5" fill="#141414"/></svg>

  <div class="a" style="left:782px;top:594px;width:26px;height:14px;background:#2a2a2a"></div>
  <svg style="left:789px;top:596.5px" width="12" height="10" viewBox="0 0 12 10" fill="none" stroke="#d0d0d0" stroke-width=".9"><rect x=".5" y=".5" width="11" height="9"/><path d="M3 .5v9M4.5 2.5h5v4h-5"/></svg>
  <svg style="left:817px;top:596.5px" width="10" height="10" viewBox="0 0 10 10" fill="none" stroke="#d0d0d0" stroke-width=".9"><rect x=".5" y=".5" width="3.5" height="3.5"/><rect x="6" y=".5" width="3.5" height="3.5"/><rect x=".5" y="6" width="3.5" height="3.5"/><rect x="6" y="6" width="3.5" height="3.5"/></svg>
  <svg style="left:842px;top:596.5px" width="12" height="10" viewBox="0 0 12 10" fill="none" stroke="#d0d0d0" stroke-width=".9"><path d="M6 1.5v8M.5 1h4c1 0 1.5.3 1.5 1 0-.7.5-1 1.5-1h4v8h-4c-1 0-1.5.3-1.5.5 0-.2-.5-.5-1.5-.5h-4Z"/><path d="M2 3.5h2.5M2 5.5h2.5M7.5 3.5H10M7.5 5.5H10"/></svg>
  <svg style="left:869px;top:596px" width="10" height="11" viewBox="0 0 10 11" fill="none" stroke="#d0d0d0" stroke-width=".9"><path d="M.5 .8h9M1.5 .8v5.5h7V.8M5 6.3v3.5M2.5 10h5"/><path d="M4 2.3v2.8l2.2-1.4Z" fill="#d0d0d0" stroke="none"/></svg>
  <div class="a" style="left:891px;top:601px;width:5px;height:1px;background:#c8c8c8"></div>
  <div class="a" style="left:900px;top:601px;width:67px;height:1px;background:#8a8a8a"></div>
  <div class="a" style="left:933.5px;top:596.5px;width:3px;height:9px;background:#d0d0d0"></div>
  <svg style="left:970px;top:597.5px" width="7" height="7" viewBox="0 0 7 7" fill="none" stroke="#c8c8c8" stroke-width=".9"><path d="M3.5 0v7M0 3.5h7"/></svg>
  <svg style="left:1011px;top:595.5px" width="12" height="12" viewBox="0 0 12 12" fill="none" stroke="#d0d0d0" stroke-width=".9"><rect x="3" y="3" width="6" height="6"/><path d="M6 0 4.5 1.5h3ZM6 12l-1.5-1.5h3ZM0 6l1.5-1.5v3ZM12 6l-1.5-1.5v3Z" fill="#d0d0d0"/></svg>
</div>


<!-- TEXT -->
<div class="a" style="left:32.80px;top:13.00px;font-size:7.40px;line-height:1;color:#e0e0e0;transform:scale(0.9325,1.000);transform-origin:0 0;">Automaattinen tallennus</div>
<div class="a" style="left:254.24px;top:12.00px;font-size:8.60px;line-height:1;color:#e6e6e6;transform:scale(0.9457,1.000);transform-origin:0 0;">Teams-käyttöönotto - koulutus ja viestintä</div>
<div class="a" style="left:421.07px;top:12.00px;font-size:8.45px;line-height:1;color:#e6e6e6;transform:scale(0.9364,1.000);transform-origin:0 0;">Ei tunnistetta</div>
<div class="a" style="left:477.14px;top:12.00px;font-size:8.45px;line-height:1;color:#e6e6e6;transform:scale(0.9465,1.000);transform-origin:0 0;">Tallennettu kohteeseen tämä tietokone</div>
<div class="a" style="left:665.95px;top:11.00px;font-size:9.60px;line-height:1;color:#c8c8c8;transform:scale(0.9703,1.000);transform-origin:0 0;">Haku</div>
<div class="a" style="left:3.52px;top:39.00px;font-size:9.30px;line-height:1;color:#e2e2e2;transform:scale(0.9817,1.000);transform-origin:0 0;">Tiedosto</div>
<div class="a" style="left:44.99px;top:39.00px;font-size:9.30px;line-height:1;color:#f0f0f0;transform:scale(0.9055,1.000);transform-origin:0 0;"><span style="font-weight:700">Aloitus</span></div>
<div class="a" style="left:84.70px;top:39.00px;font-size:9.30px;line-height:1;color:#e2e2e2;transform:scale(0.9356,1.000);transform-origin:0 0;">Lisää</div>
<div class="a" style="left:117.16px;top:39.00px;font-size:9.30px;line-height:1;color:#e2e2e2;transform:scale(0.9918,1.000);transform-origin:0 0;">Piirrä</div>
<div class="a" style="left:151.69px;top:39.00px;font-size:9.30px;line-height:1;color:#e2e2e2;transform:scale(0.9601,1.000);transform-origin:0 0;">Rakenne</div>
<div class="a" style="left:200.28px;top:39.00px;font-size:9.30px;line-height:1;color:#e2e2e2;">Siirtymät</div>
<div class="a" style="left:249.60px;top:39.00px;font-size:9.30px;line-height:1;color:#e2e2e2;transform:scale(1.0148,1.000);transform-origin:0 0;">Animaatiot</div>
<div class="a" style="left:307.08px;top:39.00px;font-size:9.30px;line-height:1;color:#e2e2e2;transform:scale(0.9716,1.000);transform-origin:0 0;">Diaesitys</div>
<div class="a" style="left:355.52px;top:39.00px;font-size:9.30px;line-height:1;color:#e2e2e2;transform:scale(0.9664,1.000);transform-origin:0 0;">Tallenna</div>
<div class="a" style="left:401.72px;top:39.00px;font-size:9.30px;line-height:1;color:#e2e2e2;transform:scale(0.9450,1.000);transform-origin:0 0;">Tarkista</div>
<div class="a" style="left:444.84px;top:39.00px;font-size:9.30px;line-height:1;color:#e2e2e2;transform:scale(1.0243,1.000);transform-origin:0 0;">Näytä</div>
<div class="a" style="left:482.09px;top:39.00px;font-size:9.30px;line-height:1;color:#e2e2e2;transform:scale(0.9901,1.000);transform-origin:0 0;">Ohje</div>
<div class="a" style="left:829.92px;top:39.00px;font-size:9.15px;line-height:1;color:#ececec;transform:scale(0.9675,1.000);transform-origin:0 0;">Tallenna</div>
<div class="a" style="left:886.82px;top:39.00px;font-size:9.15px;line-height:1;color:#ececec;transform:scale(0.9234,1.000);transform-origin:0 0;">Esitä Teamsissa</div>
<div class="a" style="left:993.58px;top:38.00px;font-size:8.70px;line-height:1;color:#1a1a1a;transform:scale(0.8936,1.000);transform-origin:0 0;">Jaa</div>
<div class="a" style="left:19.45px;top:81.00px;font-size:8.60px;line-height:1;color:#e8e8e8;transform:scale(0.9408,1.000);transform-origin:0 0;">Liitä</div>
<div class="a" style="left:91.00px;top:81.00px;font-size:8.60px;line-height:1;color:#e8e8e8;transform:scale(0.9252,1.000);transform-origin:0 0;">Uusi</div>
<div class="a" style="left:89.95px;top:91.00px;font-size:8.60px;line-height:1;color:#e8e8e8;transform:scale(1.0057,1.000);transform-origin:0 0;">dia</div>
<div class="a" style="left:115.12px;top:81.00px;font-size:8.60px;line-height:1;color:#e8e8e8;transform:scale(0.9013,1.000);transform-origin:0 0;">Uusi dia</div>
<div class="a" style="left:116.07px;top:91.00px;font-size:8.60px;line-height:1;color:#e8e8e8;transform:scale(0.9896,1.000);transform-origin:0 0;">Copilot</div>
<div class="a" style="left:545.21px;top:81.00px;font-size:8.60px;line-height:1;color:#e8e8e8;transform:scale(1.0054,1.000);transform-origin:0 0;">Muodot</div>
<div class="a" style="left:578.29px;top:81.00px;font-size:8.60px;line-height:1;color:#e8e8e8;transform:scale(0.8608,1.000);transform-origin:0 0;">Järjestä</div>
<div class="a" style="left:685.96px;top:79.00px;font-size:8.60px;line-height:1;color:#e8e8e8;transform:scale(0.9260,1.000);transform-origin:0 0;">Muokkaus</div>
<div class="a" style="left:735.35px;top:82.00px;font-size:8.60px;line-height:1;color:#e8e8e8;transform:scale(0.8995,1.000);transform-origin:0 0;">Sanele</div>
<div class="a" style="left:774.14px;top:81.00px;font-size:8.60px;line-height:1;color:#e8e8e8;transform:scale(0.9240,1.000);transform-origin:0 0;">Sensitivity</div>
<div class="a" style="left:824.80px;top:81.00px;font-size:8.60px;line-height:1;color:#e8e8e8;transform:scale(0.9575,1.000);transform-origin:0 0;">Apuohjelmat</div>
<div class="a" style="left:884.45px;top:81.00px;font-size:8.60px;line-height:1;color:#e8e8e8;transform:scale(0.9154,1.000);transform-origin:0 0;">Suunnitteluehdotukset</div>
<div class="a" style="left:967.28px;top:81.00px;font-size:8.60px;line-height:1;color:#e8e8e8;transform:scale(0.9858,1.000);transform-origin:0 0;">Copilot</div>
<div class="a" style="left:608.15px;top:81.00px;font-size:8.60px;line-height:1;color:#6e6e6e;transform:scale(0.9489,1.000);transform-origin:0 0;">Pikatyylit</div>
<div class="a" style="left:21.15px;top:109.00px;font-size:7.70px;line-height:1;color:#e6e6e6;transform:scale(0.8877,1.000);transform-origin:0 0;">Leikepöytä</div>
<div class="a" style="left:121.81px;top:109.00px;font-size:7.70px;line-height:1;color:#e6e6e6;transform:scale(0.9529,1.000);transform-origin:0 0;">Diat</div>
<div class="a" style="left:266.22px;top:109.00px;font-size:7.70px;line-height:1;color:#e6e6e6;transform:scale(0.9485,1.000);transform-origin:0 0;">Fontti</div>
<div class="a" style="left:443.13px;top:109.00px;font-size:7.70px;line-height:1;color:#e6e6e6;transform:scale(0.9232,1.000);transform-origin:0 0;">Kappale</div>
<div class="a" style="left:595.11px;top:109.00px;font-size:7.70px;line-height:1;color:#e6e6e6;transform:scale(0.9522,1.000);transform-origin:0 0;">Piirto</div>
<div class="a" style="left:738.77px;top:109.00px;font-size:7.70px;line-height:1;color:#e6e6e6;transform:scale(0.8638,1.000);transform-origin:0 0;">Puhe</div>
<div class="a" style="left:767.34px;top:109.00px;font-size:7.70px;line-height:1;color:#e6e6e6;transform:scale(0.9051,1.000);transform-origin:0 0;">Luottamuksell...</div>
<div class="a" style="left:827.70px;top:109.00px;font-size:7.70px;line-height:1;color:#e6e6e6;transform:scale(0.9056,1.000);transform-origin:0 0;">Apuohjelmat</div>
<div class="a" style="left:926.83px;top:109.00px;font-size:7.70px;line-height:1;color:#e6e6e6;transform:scale(0.9565,1.000);transform-origin:0 0;">Copilot</div>
<div class="a" style="left:159.32px;top:181.00px;font-size:40.70px;line-height:1;color:#70bf45;transform:scale(0.9699,1.000);transform-origin:0 0;">Osaamisen</div>
<div class="a" style="left:368.19px;top:181.00px;font-size:40.70px;line-height:1;color:#70bf45;transform:scale(1.0607,1.000);transform-origin:0 0;">kartuttaminen</div>
<div class="a" style="left:145.83px;top:228.00px;font-size:40.70px;line-height:1;color:#70bf45;transform:scale(1.0090,1.000);transform-origin:0 0;">koulutuksella</div>
<div class="a" style="left:394.99px;top:228.00px;font-size:40.70px;line-height:1;color:#70bf45;transform:scale(0.9705,1.000);transform-origin:0 0;">ja</div>
<div class="a" style="left:438.80px;top:228.00px;font-size:40.70px;line-height:1;color:#70bf45;">viestinnällä</div>
<div class="a" style="left:105.87px;top:283.00px;font-size:19.90px;line-height:1;color:#595959;transform:scale(1.0231,1.000);transform-origin:0 0;">Henkilöstön kouluttamisen varmistamiseksi yhteiset tavoitteet,</div>
<div class="a" style="left:107.20px;top:309.00px;font-size:19.90px;line-height:1;color:#595959;transform:scale(1.0204,1.000);transform-origin:0 0;">toimintatavat ja käytännöt organisaation kirjataan pelikirjaksi, eli</div>
<div class="a" style="left:106.09px;top:335.00px;font-size:19.90px;line-height:1;color:#595959;transform:scale(1.0156,1.000);transform-origin:0 0;">hallintamalliksi, kuvaamaan mitä työkaluja käytetään mihinkin</div>
<div class="a" style="left:107.20px;top:361.00px;font-size:19.90px;line-height:1;color:#595959;transform:scale(1.0103,1.000);transform-origin:0 0;">tarkoitukseen ja miksi</div>
<div class="a" style="left:137.35px;top:398.00px;font-size:15.70px;line-height:1;color:#595959;transform:scale(1.0573,0.910);transform-origin:0 0;">Selkeyttä työntekoon</div>
<div class="a" style="left:137.69px;top:424.00px;font-size:15.70px;line-height:1;color:#595959;transform:scale(1.0335,0.910);transform-origin:0 0;">Ymmärrystä muutoksen tärkeydestä</div>
<div class="a" style="left:136.75px;top:450.00px;font-size:15.70px;line-height:1;color:#595959;transform:scale(1.0722,0.910);transform-origin:0 0;">Hyötyjä kytkettynä käytäntöön</div>
<div class="a" style="left:618.84px;top:539.00px;font-size:11.90px;line-height:1;color:#4d4d4d;transform:scale(0.9242,0.880);transform-origin:0 0;"><span style="font-weight:700">© 2020 </span>Solu Digital</div>
<div class="a" style="left:799.35px;top:167.00px;font-size:8.15px;line-height:1;color:#6b6b6b;transform:scale(0.9281,1.000);transform-origin:0 0;">Tänään</div>
<div class="a" style="left:805.06px;top:207.00px;font-size:10.05px;line-height:1;color:#3a3a3a;transform:scale(0.9240,0.880);transform-origin:0 0;">Ehdota kuvakkeita ja asetteluja tälle dian</div>
<div class="a" style="left:805.52px;top:221.00px;font-size:10.05px;line-height:1;color:#3a3a3a;transform:scale(0.9131,0.880);transform-origin:0 0;">sisällölle</div>
<div class="a" style="left:809.99px;top:257.00px;font-size:10.05px;line-height:1;color:#222222;transform:scale(1.0064,0.880);transform-origin:0 0;"><span style="-webkit-text-stroke:.4px currentColor">Copilot</span></div>
<div class="a" style="left:794.50px;top:271.00px;font-size:10.05px;line-height:1;color:#3a3a3a;transform:scale(0.9526,0.880);transform-origin:0 0;">Alla on <span style="-webkit-text-stroke:.4px currentColor;color:#222222">konkreettiset kuvake- ja</span></div>
<div class="a" style="left:794.11px;top:284.00px;font-size:10.05px;line-height:1;color:#3a3a3a;transform:scale(0.9655,0.880);transform-origin:0 0;"><span style="-webkit-text-stroke:.4px currentColor;color:#222222">asetteluehdotukset juuri tälle dialle (slide 5)</span>,</div>
<div class="a" style="left:793.89px;top:297.00px;font-size:10.05px;line-height:1;color:#3a3a3a;transform:scale(0.9298,0.880);transform-origin:0 0;">perustuen dian todelliseen sisältöön. Mukana on</div>
<div class="a" style="left:794.45px;top:311.00px;font-size:10.05px;line-height:1;color:#3a3a3a;transform:scale(0.9348,0.880);transform-origin:0 0;">vaihtoehtoja, joista voit poimia PowerPointiin</div>
<div class="a" style="left:793.89px;top:324.00px;font-size:10.05px;line-height:1;color:#3a3a3a;transform:scale(0.9348,0.880);transform-origin:0 0;">parhaiten sopivan.</div>
<div class="a" style="left:888.06px;top:324.00px;font-size:7.25px;line-height:1;color:#555;transform:scale(0.9542,1.000);transform-origin:0 0;">Teams-käyttöönotto - ...</div>
<div class="a" style="left:793.40px;top:376.00px;font-size:14.40px;line-height:1;color:#303030;transform:scale(0.9574,1.000);transform-origin:0 0;-webkit-text-stroke:.6px #303030;">Dian ydin (tiivistettynä)</div>
<div class="a" style="left:794.07px;top:397.00px;font-size:10.05px;line-height:1;color:#2a2a2a;transform:scale(0.9576,0.880);transform-origin:0 0;"><span style="-webkit-text-stroke:.4px currentColor">Osaamisen kartuttaminen koulutuksella ja</span></div>
<div class="a" style="left:794.45px;top:409.00px;font-size:10.05px;line-height:1;color:#2a2a2a;transform:scale(0.9588,0.880);transform-origin:0 0;"><span style="-webkit-text-stroke:.4px currentColor">viestinnällä</span></div>
<div class="a" style="left:810.26px;top:428.00px;font-size:10.05px;line-height:1;color:#3a3a3a;transform:scale(0.9410,0.880);transform-origin:0 0;">Yhteiset tavoitteet ja toimintatavat</div>
<div class="a" style="left:801.6px;top:431.10px;width:2.8px;height:2.8px;border-radius:50%;background:#3a3a3a"></div>
<div class="a" style="left:809.84px;top:441.00px;font-size:10.05px;line-height:1;color:#222222;transform:scale(1.0062,0.880);transform-origin:0 0;"><span style="-webkit-text-stroke:.4px currentColor">pelikirja / hallintamalli</span></div>
<div class="a" style="left:810.07px;top:455.00px;font-size:10.05px;line-height:1;color:#3a3a3a;transform:scale(0.9403,0.880);transform-origin:0 0;">Selkeyttä työntekoon</div>
<div class="a" style="left:801.6px;top:458.10px;width:2.8px;height:2.8px;border-radius:50%;background:#3a3a3a"></div>
<div class="a" style="left:810.27px;top:469.00px;font-size:10.05px;line-height:1;color:#3a3a3a;transform:scale(0.9147,0.880);transform-origin:0 0;">Ymmärrystä muutoksen tärkeydestä</div>
<div class="a" style="left:801.6px;top:471.40px;width:2.8px;height:2.8px;border-radius:50%;background:#3a3a3a"></div>
<div class="a" style="left:809.74px;top:482.00px;font-size:10.05px;line-height:1;color:#3a3a3a;transform:scale(0.9429,0.880);transform-origin:0 0;">Hyödyt kytkettynä arkeen</div>
<div class="a" style="left:801.6px;top:484.60px;width:2.8px;height:2.8px;border-radius:50%;background:#3a3a3a"></div>
<svg style="left:954.8px;top:430.5px" width="8" height="5" viewBox="0 0 8 5" fill="none" stroke="#3a3a3a" stroke-width=".9"><path d="M0 2.5h7.2M5 .4l2.2 2.1L5 4.6"/></svg>
<div class="a" style="left:780px;top:127px;width:237px;height:378.5px;overflow:hidden"><div class="a" style="left:14.31px;top:370.00px;font-size:10.05px;line-height:1;color:#3a3a3a;transform:scale(0.9266,0.880);transform-origin:0 0;">Tämä antaa hyvän pohjan <span style="-webkit-text-stroke:.4px currentColor;color:#222222">3–4 ikonilliselle</span></div></div>
<div class="a" style="left:811.45px;top:518.00px;font-size:9.15px;line-height:1;color:#707070;transform:scale(1.0312,1.000);transform-origin:0 0;">Lähetä viesti Copilotille</div>
<div class="a" style="left:826.04px;top:572.00px;font-size:8.00px;line-height:1;color:#5c5c5c;transform:scale(0.9962,1.030);transform-origin:0 0;">Tekoälyllä luotu sisältö voi olla virheellistä</div>
<div class="a" style="left:7.22px;top:599.00px;font-size:8.00px;line-height:1;color:#d0d0d0;transform:scale(0.9110,1.030);transform-origin:0 0;">Dia 5/17</div>
<div class="a" style="left:68.47px;top:599.00px;font-size:8.00px;line-height:1;color:#d0d0d0;transform:scale(0.8668,1.030);transform-origin:0 0;">englanti (Yhdysvallat)</div>
<div class="a" style="left:156.75px;top:599.00px;font-size:8.00px;line-height:1;color:#ececec;transform:scale(0.8668,1.030);transform-origin:0 0;"><span style="font-weight:700">Helppokäyttöisyys: tutustu suosituksiin</span></div>
<div class="a" style="left:652.92px;top:599.00px;font-size:8.00px;line-height:1;color:#d0d0d0;transform:scale(0.9087,1.030);transform-origin:0 0;">Muistiinpanot</div>
<div class="a" style="left:718.04px;top:599.00px;font-size:8.00px;line-height:1;color:#d0d0d0;transform:scale(0.8698,1.030);transform-origin:0 0;">Näyttöasetukset</div>
<div class="a" style="left:984.40px;top:599.00px;font-size:8.00px;line-height:1;color:#d0d0d0;transform:scale(0.8349,1.030);transform-origin:0 0;">112 %</div>
</body></html>
